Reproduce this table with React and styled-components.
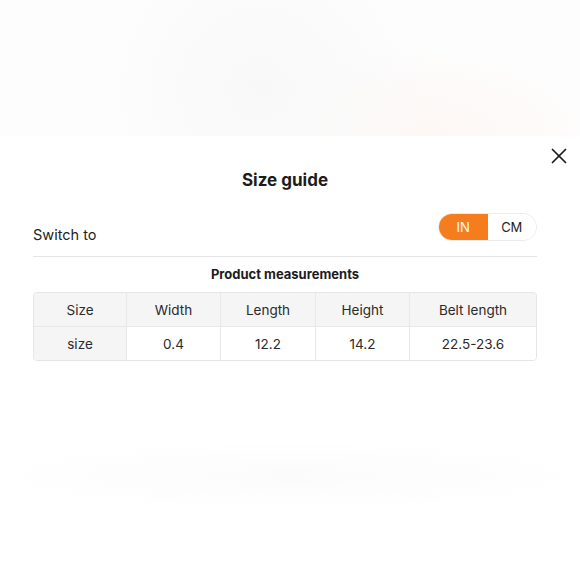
import React from "react";
import styled, { createGlobalStyle } from "styled-components";
import { X } from "lucide-react";

const headers = ["Size", "Width", "Length", "Height", "Belt length"];
const rows = [["size", "0.4", "12.2", "14.2", "22.5-23.6"]];

const App = () => {
  return (
    <Page>
      <GlobalStyle />
      <Backdrop />
      <Panel>
        <Close aria-label="Close">
          <X size={26} strokeWidth={1.6} />
        </Close>
        <Title>Size guide</Title>
        <SwitchRow>
          <Label>Switch to</Label>
          <Toggle>
            <ToggleOption $active>IN</ToggleOption>
            <ToggleOption>CM</ToggleOption>
          </Toggle>
        </SwitchRow>
        <Subtitle>Product measurements</Subtitle>
        <Table>
          <thead>
            <tr>
              {headers.map((h) => (
                <Cell as="th" key={h} $shaded>
                  {h}
                </Cell>
              ))}
            </tr>
          </thead>
          <tbody>
            {rows.map((r, i) => (
              <tr key={i}>
                {r.map((v, j) => (
                  <Cell key={j} $shaded={j === 0}>
                    {v}
                  </Cell>
                ))}
              </tr>
            ))}
          </tbody>
        </Table>
        <Wave />
      </Panel>
    </Page>
  );
};

export default App;

const GlobalStyle = createGlobalStyle`
  html, body {
    margin: 0;
    padding: 0;
    background: #fff;
  }
  body {
    font-family: Inter, "Liberation Sans", sans-serif;
    color: #1f1f1f;
  }
`;

const Page = styled.div`
  width: 580px;
  height: 580px;
  overflow: hidden;
  display: flex;
  flex-direction: column;
  background: #fff;
`;

const Backdrop = styled.div`
  height: 136px;
  flex-shrink: 0;
  background:
    radial-gradient(circle at 260px 88px, #f8f8f8 0px, #fafafa 60px, rgba(252, 252, 252, 0) 170px),
    radial-gradient(ellipse 180px 90px at 420px 136px, #fdf7f4 0%, rgba(253, 250, 248, 0) 100%),
    #fdfdfd;
`;

const Panel = styled.div`
  position: relative;
  flex: 1;
  display: flex;
  flex-direction: column;
  padding: 0 43px 0 33px;
  background: #fff;
`;

const Close = styled.button`
  position: absolute;
  top: 7px;
  left: 546px;
  width: 26px;
  height: 26px;
  padding: 0;
  border: none;
  background: none;
  color: #1a1a1a;
  display: flex;
  align-items: center;
  justify-content: center;
`;

const Title = styled.h2`
  margin: 32px 0 0;
  font-size: 17px;
  line-height: 24px;
  font-weight: 700;
  text-align: center;
  color: #1c1c1c;
`;

const SwitchRow = styled.div`
  margin-top: 21px;
  display: flex;
  justify-content: space-between;
  align-items: flex-end;
  padding-bottom: 15px;
  border-bottom: 1px solid #e6e6e6;
`;

const Label = styled.span`
  font-size: 14.5px;
  line-height: 18px;
  color: #222;
  margin-bottom: -3px;
`;

const Toggle = styled.div`
  display: flex;
  width: 99px;
  height: 28px;
  border: 1px solid #ebebeb;
  border-radius: 14px;
  overflow: hidden;
  box-sizing: border-box;
`;

const ToggleOption = styled.div`
  flex: 1;
  display: flex;
  align-items: center;
  justify-content: center;
  font-size: 13px;
  background: ${(p) => (p.$active ? "#f67d1e" : "#fff")};
  color: ${(p) => (p.$active ? "#fff" : "#1f1f1f")};
`;

const Subtitle = styled.h3`
  margin: 8px 0 0;
  font-size: 13px;
  line-height: 18px;
  font-weight: 700;
  text-align: center;
  color: #1c1c1c;
`;

const Table = styled.table`
  margin-top: 9px;
  width: 504px;
  border-collapse: separate;
  border-spacing: 0;
  border: 1px solid #e6e6e6;
  border-radius: 4px;
  overflow: hidden;
  table-layout: fixed;

  th:nth-child(1) { width: 92px; }
  th:nth-child(2) { width: 93px; }
  th:nth-child(3) { width: 94px; }
  th:nth-child(4) { width: 93px; }

  tr:last-child td {
    border-bottom: none;
  }
  th:last-child,
  td:last-child {
    border-right: none;
  }
`;

const Cell = styled.td`
  height: 33px;
  padding: 0;
  text-align: center;
  font-size: 13.5px;
  font-weight: 400;
  color: #2a2a2a;
  background: ${(p) => (p.$shaded ? "#f5f5f5" : "#fff")};
  border-right: 1px solid #e8e8e8;
  border-bottom: 1px solid #e8e8e8;
`;

const Wave = styled.div`
  margin: 80px -43px 0 -33px;
  height: 70px;
  background: radial-gradient(ellipse 320px 35px at 290px 35px, #fbfbfb 0%, rgba(252, 252, 252, 0) 100%);
`;
